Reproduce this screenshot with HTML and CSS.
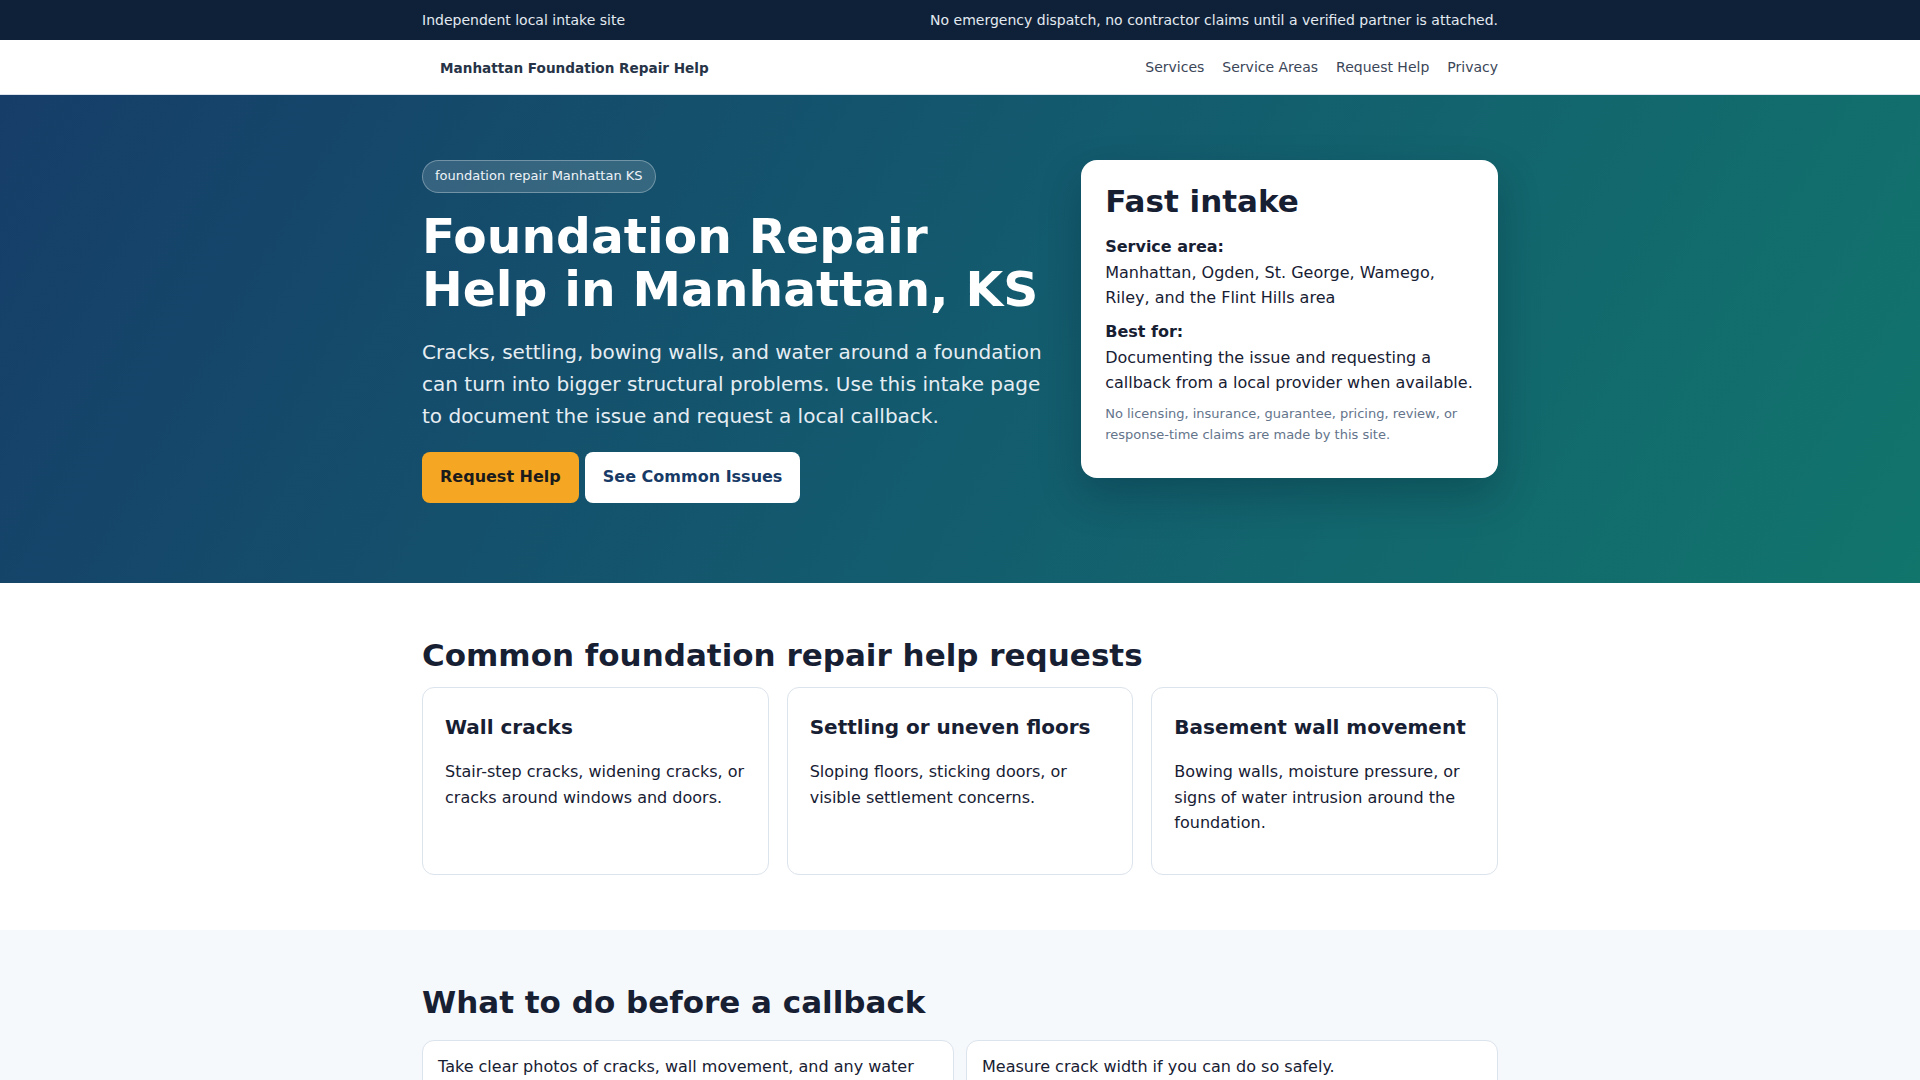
FILE: index.html
```html
<!DOCTYPE html>
<html lang="en">
<head>
  <meta charset="UTF-8" />
  <meta name="viewport" content="width=device-width, initial-scale=1" />
  <title>Foundation Repair Help in Manhattan, KS</title>
  <link rel="stylesheet" href="styles.css">
</head>
<body>
  <div class="topbar">
    <div class="container topbar-inner">
      <span>Independent local intake site</span>
      <span>No emergency dispatch, no contractor claims until a verified partner is attached.</span>
    </div>
  </div>

  <header class="site-header">
    <div class="container header-inner">
      <a class="brand" href="#">Manhattan Foundation Repair Help</a>
      <nav class="main-nav">
        <a href="#services">Services</a>
        <a href="#areas">Service Areas</a>
        <a href="#request">Request Help</a>
        <a href="#privacy">Privacy</a>
      </nav>
    </div>
  </header>

  <section class="hero">
    <div class="container hero-grid">
      <div class="hero-copy">
        <span class="eyebrow">foundation repair Manhattan KS</span>
        <h1>Foundation Repair Help in Manhattan, KS</h1>
        <p class="lead">Cracks, settling, bowing walls, and water around a foundation can turn into bigger structural problems. Use this intake page to document the issue and request a local callback.</p>
        <div class="actions">
          <a class="btn btn-primary" href="#request">Request Help</a>
          <a class="btn btn-light" href="#services">See Common Issues</a>
        </div>
      </div>
      <aside class="intake-card">
        <h2>Fast intake</h2>
        <p><strong>Service area:</strong><br>Manhattan, Ogden, St. George, Wamego, Riley, and the Flint Hills area</p>
        <p><strong>Best for:</strong><br>Documenting the issue and requesting a callback from a local provider when available.</p>
        <p class="note">No licensing, insurance, guarantee, pricing, review, or response-time claims are made by this site.</p>
      </aside>
    </div>
  </section>

  <section class="section" id="services">
    <div class="container">
      <h2 class="section-title">Common foundation repair help requests</h2>
      <div class="card-grid">
        <div class="card">
          <h3>Wall cracks</h3>
          <p>Stair-step cracks, widening cracks, or cracks around windows and doors.</p>
        </div>
        <div class="card">
          <h3>Settling or uneven floors</h3>
          <p>Sloping floors, sticking doors, or visible settlement concerns.</p>
        </div>
        <div class="card">
          <h3>Basement wall movement</h3>
          <p>Bowing walls, moisture pressure, or signs of water intrusion around the foundation.</p>
        </div>
      </div>
    </div>
  </section>

  <section class="section section-alt">
    <div class="container">
      <h2 class="section-title">What to do before a callback</h2>
      <div class="steps">
        <div class="step">Take clear photos of cracks, wall movement, and any water staining.</div>
        <div class="step">Measure crack width if you can do so safely.</div>
        <div class="step">Note when you first noticed the problem and whether it has changed.</div>
        <div class="step">Write down any recent heavy rain, drainage, or grading issues.</div>
      </div>
    </div>
  </section>
</body>
</html>
```

FILE: styles.css
```css
* {
  margin: 0;
  padding: 0;
  box-sizing: border-box;
}

body {
  font-family: "DejaVu Sans", "Noto Sans", sans-serif;
  color: #172033;
  background-color: #fff;
  line-height: 1.6;
}

a {
  color: inherit;
  text-decoration: none;
}

.container {
  width: 1076px;
  margin: 0 auto;
}

/* top strip */
.topbar {
  background-color: #0e2138;
  color: #e3e9f1;
  font-size: 14px;
}

.topbar-inner {
  height: 40px;
  display: flex;
  align-items: center;
  justify-content: space-between;
}

/* header */
.site-header {
  background-color: #fff;
  border-bottom: 1px solid #dde3ea;
}

.header-inner {
  height: 54px;
  display: flex;
  align-items: center;
  justify-content: space-between;
}

.brand {
  padding: 1px 0 0 18px;
  font-size: 13.6px;
  line-height: 22px;
  font-weight: bold;
  color: #273447;
}

.main-nav {
  display: flex;
  gap: 18px;
  font-size: 14px;
  color: #3b4658;
}

/* hero */
.hero {
  background: linear-gradient(120deg, #163d68 0%, #135a6e 50%, #11756c 100%);
  color: #fff;
  padding: 65px 0 80px;
}

.hero-grid {
  display: grid;
  grid-template-columns: 1.5fr 1fr;
  gap: 34px;
  align-items: start;
}

.eyebrow {
  display: inline-block;
  padding: 5px 12px;
  font-size: 13px;
  line-height: 1.6;
  color: #eef3f8;
  background-color: rgba(255, 255, 255, 0.14);
  border: 1px solid rgba(255, 255, 255, 0.3);
  border-radius: 999px;
}

.hero h1 {
  font-size: 48.7px;
  line-height: 1.1;
  font-weight: bold;
  margin: 17px 0 19px;
}

.lead {
  font-size: 20px;
  line-height: 1.6;
  color: #e6edf3;
  margin-bottom: 20px;
}

.actions {
  display: flex;
  gap: 6px;
}

.btn {
  display: inline-block;
  padding: 14px 18px 15px;
  font-size: 16px;
  font-weight: bold;
  line-height: 22px;
  border-radius: 8px;
}

.btn-primary {
  background-color: #f5a623;
  color: #1b1b1b;
}

.btn-light {
  background-color: #fff;
  color: #173a66;
}

.intake-card {
  background-color: #fff;
  color: #172033;
  border-radius: 16px;
  padding: 23px 24px 33px;
  box-shadow: 0 18px 40px rgba(5, 20, 40, 0.25);
}

.intake-card h2 {
  font-size: 31px;
  line-height: 1.2;
  margin-bottom: 14px;
}

.intake-card p {
  font-size: 16px;
  line-height: 1.6;
  margin-bottom: 8px;
}

.intake-card .note {
  font-size: 13px;
  color: #64748b;
  margin-top: 4px;
  margin-bottom: 0;
}

/* content sections */
.section {
  padding: 54px 0 55px;
}

.section-alt {
  background-color: #f5f9fc;
}

.section-title {
  font-size: 31px;
  line-height: 1.2;
  color: #172033;
  margin-bottom: 13px;
}

.card-grid {
  display: grid;
  grid-template-columns: repeat(3, 1fr);
  gap: 18px;
}

.card {
  border: 1px solid #dbe3ec;
  border-radius: 12px;
  padding: 22px;
  background-color: #fff;
}

.card h3 {
  font-size: 20px;
  line-height: 1.2;
  margin: 5px 0 20px;
}

.card p {
  font-size: 16px;
  line-height: 1.6;
  margin-bottom: 16px;
}

.steps {
  display: grid;
  grid-template-columns: repeat(2, 1fr);
  gap: 12px;
  margin-top: 19px;
}

.step {
  background-color: #fff;
  border: 1px solid #dbe3ec;
  border-radius: 12px;
  padding: 13px 15px;
  font-size: 16px;
}
```
